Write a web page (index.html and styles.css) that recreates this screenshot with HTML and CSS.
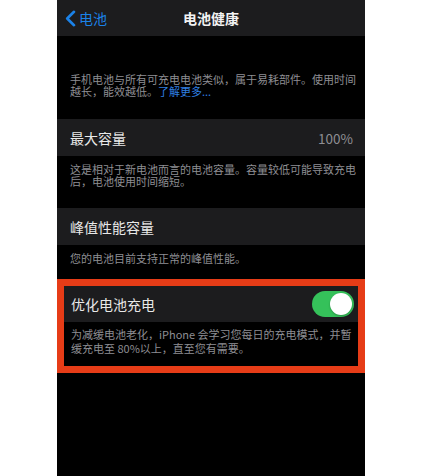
FILE: index.html
```html
<!DOCTYPE html>
<html lang="zh-CN">
<head>
<meta charset="utf-8">
<title>电池健康</title>
<link rel="stylesheet" href="styles.css">
</head>
<body>
<div class="phone">
  <header class="nav">
    <div class="back">
      <svg class="chev" width="11" height="17" viewBox="0 0 11 17"><path d="M9 1.8 L2.2 8.5 L9 15.2" fill="none" stroke="#1b82e8" stroke-width="2.6" stroke-linecap="round" stroke-linejoin="round"/></svg>
      <span>电池</span>
    </div>
    <div class="title">电池健康</div>
    <div></div>
  </header>

  <p class="intro">手机电池与所有可充电电池类似，属于易耗部件。使用时间<br>越长，能效越低。<span class="link">了解更多...</span></p>

  <div class="row"><span class="label">最大容量</span><span class="value">100%</span></div>
  <p class="desc d1">这是相对于新电池而言的电池容量。容量较低可能导致充电<br>后，电池使用时间缩短。</p>

  <div class="row"><span class="label">峰值性能容量</span></div>
  <p class="desc d2">您的电池目前支持正常的峰值性能。</p>

  <div class="highlight">
    <div class="row row-in"><span class="label">优化电池充电</span><span class="toggle"><span class="knob"></span></span></div>
    <p class="desc d3">为减缓电池老化，iPhone 会学习您每日的充电模式，并暂<br>缓充电至 80%以上，直至您有需要。</p>
  </div>
</div>
</body>
</html>
```

FILE: styles.css
```css
* { box-sizing: border-box; }
html, body { margin: 0; padding: 0; background: #ffffff; }
body { font-family: "Noto Sans CJK SC", "Noto Sans", sans-serif; }

.phone {
  margin-left: 57px;
  width: 308px;
  height: 476px;
  background: #000000;
  overflow: hidden;
}

.nav {
  height: 36px;
  background: #1c1c1e;
  display: grid;
  grid-template-columns: 1fr auto 1fr;
  align-items: center;
  padding: 0 8px;
}
.back {
  display: flex;
  align-items: center;
  gap: 3px;
  color: #1b82e8;
  font-size: 14px;
  line-height: 16px;
}
.chev { display: block; }
.title {
  color: #f2f2f2;
  font-size: 14px;
  font-weight: 600;
  line-height: 16px;
}

.intro {
  margin: 0;
  padding: 37px 9px 22px 13px;
  font-size: 11px;
  line-height: 12px;
  color: #8e8e93;
  white-space: nowrap;
}
.link { color: #2f7fe0; }

.row {
  height: 37px;
  background: #1c1c1e;
  display: flex;
  align-items: center;
  justify-content: space-between;
  padding: 0 12px 0 13px;
}
.label {
  color: #e8e8e8;
  font-size: 14px;
  line-height: 16px;
}
.value {
  color: #8e8e93;
  font-size: 13.5px;
  line-height: 16px;
}

.desc {
  margin: 0;
  font-size: 11px;
  line-height: 12px;
  color: #8e8e93;
  white-space: nowrap;
  padding-left: 13px;
}
.d1 { padding-top: 7px; padding-bottom: 21px; }
.d2 { padding-top: 7px; padding-bottom: 15px; }

.highlight {
  border: 7px solid #e63c17;
  background: #000000;
}
.row-in {
  height: 36px;
  padding: 0 4px 0 7px;
}
.d3 {
  padding: 6px 0 11px 7px;
  line-height: 13.5px;
}

.toggle {
  width: 42px;
  height: 26px;
  border-radius: 13px;
  background: #35c15a;
  display: flex;
  align-items: center;
  justify-content: flex-end;
  padding: 2px;
}
.knob {
  width: 22px;
  height: 22px;
  border-radius: 50%;
  background: #ffffff;
  box-shadow: 0 1px 2px rgba(0,0,0,0.25);
}
```
